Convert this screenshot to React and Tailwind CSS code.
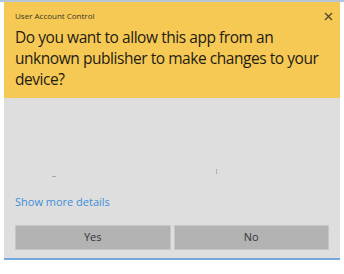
import React from 'react';

export default function App() {
  return (
    <div className="w-[344px] h-[274px] bg-white overflow-hidden [font-family:'Open_Sans','Noto_Sans',sans-serif]">
      <div className="h-[2px] bg-[#b4c6d8]" />
      <div className="mx-[4px] w-[336px] flex flex-col">
        {/* Header */}
        <div className="bg-[#f6c954] h-[96px] pl-[11px] pr-[6px] pt-[7px]">
          <div className="flex items-center justify-between h-[14px]">
            <span className="text-[8px] text-[#3a3526]">User Account Control</span>
            <svg width="9" height="9" viewBox="0 0 9 9" className="mr-[1px]">
              <path d="M1 1 L8 8 M8 1 L1 8" stroke="#4a4332" strokeWidth="1.2" />
            </svg>
          </div>
          <p className="mt-[4px] text-[15.5px] leading-[21px] tracking-[-0.45px] text-[#1f1c14] whitespace-nowrap">
            Do you want to allow this app from an<br />
            unknown publisher to make changes to your<br />
            device?
          </p>
        </div>

        {/* Body */}
        <div className="bg-[#dedede] h-[160px] flex flex-col px-[11px]">
          <div className="relative h-[97px]">
            <span className="absolute left-[37px] top-[78px] w-[4px] h-[1px] bg-[#a8a8a8]" />
            <span className="absolute left-[201px] top-[71px] w-[1px] h-[5px] bg-[#b0b0b0]" />
          </div>
          <div className="text-[11px] leading-[14px] text-[#3f8fd9]">Show more details</div>
          <div className="flex gap-[3px] mt-[16px]">
            <button className="w-[157px] h-[25px] bg-[#b3b3b3] border border-[#c6c6c6] text-[11px] text-[#333]">Yes</button>
            <button className="w-[157px] h-[25px] bg-[#b3b3b3] border border-[#c6c6c6] text-[11px] text-[#333]">No</button>
          </div>
        </div>
        <div className="h-[2px] bg-[#74a8dc]" />
      </div>
    </div>
  );
}
